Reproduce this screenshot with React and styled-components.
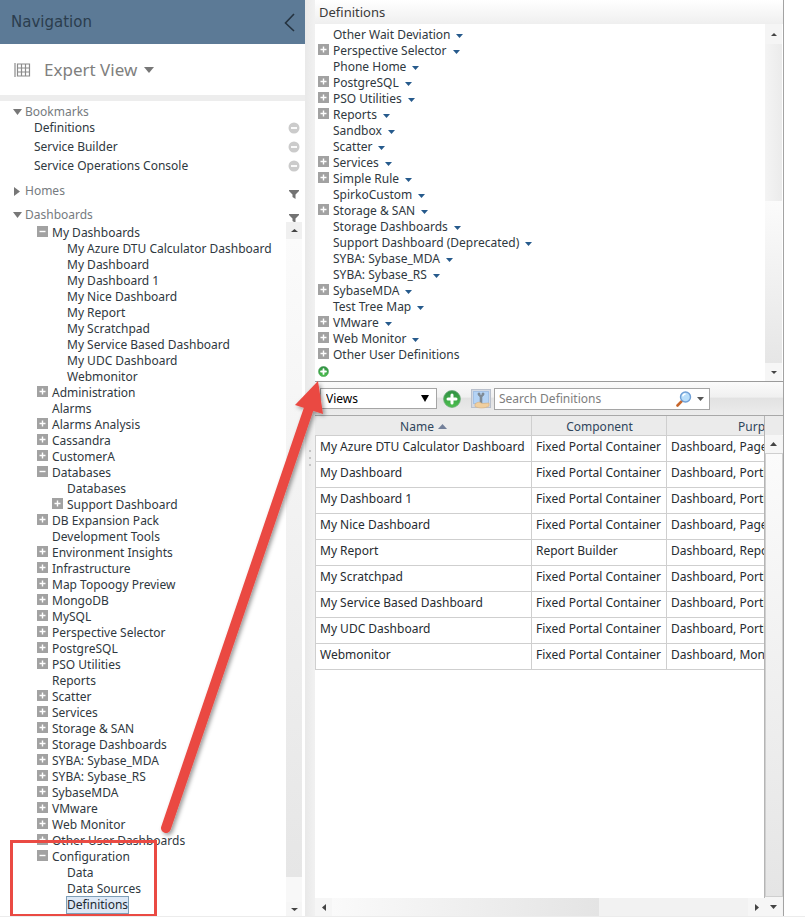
import React from 'react';
import styled, { createGlobalStyle } from 'styled-components';

const Global = createGlobalStyle`
  *, *::before, *::after { box-sizing: border-box; }
  body { margin: 0; background: #fff; }
  body, button, input, select {
    font-family: "Noto Sans", Tahoma, Verdana, sans-serif;
    font-size: 12px;
    line-height: 16px;
    color: #333c44;
  }
  ul { list-style: none; margin: 0; padding: 0; }
  h1, h2 { margin: 0; font-weight: 400; }
  button { background: none; border: 0; padding: 0; cursor: pointer; }
  svg { display: block; flex: none; }
`;

const Page = styled.div`
  position: relative;
  display: grid;
  grid-template-columns: 305px 10px minmax(0, 1fr);
  height: 100vh;
  min-height: 600px;
  padding-right: 21px;
  border-bottom: 1px solid #ececec;
  overflow: hidden;
`;

/* ---------- Navigation ---------- */
const Nav = styled.nav`
  display: flex;
  flex-direction: column;
  min-height: 0;
`;
const NavHeader = styled.header`
  display: flex;
  align-items: center;
  justify-content: space-between;
  flex: none;
  height: 44px;
  padding: 0 10px 0 11px;
  background: #5c7a96;
`;
const NavTitle = styled.h1`
  font: 15px/20px "DejaVu Sans", Verdana, sans-serif;
  color: #2b3d4d;
`;
const ViewBar = styled.div`
  display: flex;
  flex: none;
  height: 57px;
  padding: 0 14px;
  border-bottom: 6px solid #ededed;
`;
const ViewButton = styled.button`
  display: flex;
  align-items: center;
  font-size: 17px;
  line-height: 24px;
  color: #80807e;
`;
const ViewName = styled.span`
  margin: 0 7px 0 13px;
`;
const Section = styled.div`
  display: flex;
  align-items: flex-start;
  justify-content: space-between;
  flex: none;
  height: ${p => p.$height}px;
  padding: ${p => p.$top}px 6px 0 12px;
`;
const SectionButton = styled.button`
  display: flex;
  align-items: center;
  gap: 3px;
  color: #767b80;
`;
const ChevronBox = styled.span`
  display: flex;
  justify-content: center;
  width: 10px;
`;
const IconButton = styled.button`
  display: flex;
  padding: ${p => p.$pad || 0}px 0 0;
`;
const Bookmarks = styled.ul`
  display: grid;
  gap: 1px;
  flex: none;
`;
const Bookmark = styled.li`
  display: flex;
  align-items: center;
  justify-content: space-between;
  height: 18px;
  padding: 0 5px 0 34px;
`;
const ItemLink = styled.a`
  color: #2f3840;
  text-decoration: none;
  white-space: nowrap;
`;
const NavScroll = styled.div`
  display: flex;
  flex: 1;
  min-height: 0;
  padding-right: 3px;
`;
const NavTree = styled.ul`
  flex: 1;
  min-width: 0;
  overflow: hidden;
  padding: 3px 0 0;
`;
const Row = styled.li`
  display: flex;
  align-items: center;
  height: 16px;
  padding-left: ${p => p.$indent}px;
`;
const Expander = styled.span`
  display: flex;
  flex: none;
  width: 11px;
  margin: 0 4px 3px 0;
`;
const TreeLink = styled(ItemLink)`
  ${p => p.$selected && `
    background: #dde8f6;
    outline: 1px solid #7f9fb8;
    color: #1f2a33;
  `}
`;

/* ---------- Scroll bars ---------- */
const VBar = styled.div`
  display: flex;
  flex-direction: column;
  flex: none;
  width: ${p => p.$width}px;
  background: ${p => p.$bg};
`;
const BarEnd = styled.button`
  display: flex;
  align-items: center;
  justify-content: center;
  flex: none;
  width: ${p => p.$w || 16}px;
  height: ${p => p.$h || 16}px;
  background: ${p => p.$bg || '#f6f6f6'};
`;
const Fill = styled.div`
  flex: ${p => p.$grow};
  background: ${p => p.$bg};
  border: ${p => p.$border || 0};
`;

/* ---------- Splitter ---------- */
const Splitter = styled.div`
  display: flex;
  flex-direction: column;
  align-items: center;
  justify-content: center;
  gap: 5px;
  background: linear-gradient(90deg, #e9e9e9, #f1f1f1);
`;
const Dot = styled.span`
  width: 2px;
  height: 2px;
  background: #c4c4c4;
`;

/* ---------- Main ---------- */
const Main = styled.main`
  display: flex;
  flex-direction: column;
  min-width: 0;
  min-height: 0;
  border-right: 1px solid #a3a3a3;
`;
const PaneHeader = styled.header`
  flex: none;
  height: 24px;
  padding: 2px 4px;
  background: linear-gradient(#ffffff, #efefef);
`;
const PaneTitle = styled.h2`
  font-size: 13px;
  line-height: 20px;
  color: #3a3a3a;
`;
const DefinitionsPane = styled.section`
  display: flex;
  flex: none;
  height: 358px;
  padding-right: 1px;
  border-bottom: 1px solid #9b9b9b;
`;
const DefinitionTree = styled.ul`
  display: flex;
  flex-direction: column;
  justify-content: flex-end;
  flex: 1;
  min-width: 0;
  overflow: hidden;
  padding-bottom: 2px;
`;
const MenuButton = styled.button`
  display: flex;
  margin: 1px 0 0 6px;
`;
const Toolbar = styled.div`
  display: flex;
  align-items: center;
  flex: none;
  height: 34px;
  padding: 0 5px;
  background: linear-gradient(#fbfbfb, #f0f0f0 45%, #e2e2e2 50%, #ececec);
  border-bottom: 1px solid #a8a8a8;
`;
const SelectWrap = styled.span`
  position: relative;
  display: flex;
  align-items: center;
  width: 117px;
`;
const Select = styled.select`
  appearance: none;
  width: 100%;
  height: 21px;
  padding: 0 5px;
  border: 1px solid #a5a5a5;
  border-radius: 0;
  background: #fff;
  color: #000;
`;
const SelectArrow = styled.span`
  position: absolute;
  right: 8px;
  pointer-events: none;
`;
const ToolButton = styled.button`
  display: flex;
  margin-left: ${p => p.$left}px;
`;
const SearchBox = styled.div`
  display: flex;
  align-items: center;
  width: 216px;
  height: 22px;
  margin-left: 3px;
  padding: 0 5px 0 4px;
  background: #fff;
  border: 1px solid #a5a5a5;
`;
const SearchInput = styled.input`
  flex: 1;
  min-width: 0;
  border: 0;
  padding: 0;
  outline: 0;
  background: transparent;
  &::placeholder { color: #7e7e7e; opacity: 1; }
`;
const Grid = styled.section`
  display: flex;
  flex: 1;
  min-height: 0;
  background: linear-gradient(#ebebeb, #ebebeb) 0 0 / 100% 19px no-repeat;
`;
const TableColumn = styled.div`
  display: flex;
  flex-direction: column;
  flex: 1;
  min-width: 0;
`;
const TableClip = styled.div`
  flex: 1;
  min-height: 0;
  overflow: hidden;
  border-right: 1px solid #b5b5b5;
`;
const Table = styled.table`
  table-layout: fixed;
  width: 541px;
  border-collapse: separate;
  border-spacing: 0;
  color: #262b30;
`;
const Th = styled.th`
  width: ${p => p.$width}px;
  height: 20px;
  padding: 2px 0 0 1px;
  font-weight: 400;
  color: #30465c;
  background: #ebebeb;
  border-right: 1px solid #cfcfcf;
  border-bottom: 1px solid #cfcfcf;
`;
const SortLabel = styled.span`
  display: inline-flex;
  align-items: center;
  gap: 4px;
`;
const Td = styled.td`
  height: 26px;
  padding: 3px 4px 6px;
  vertical-align: top;
  white-space: nowrap;
  overflow: hidden;
  border-right: 1px solid #cfcfcf;
  border-bottom: 1px solid #cfcfcf;
  &:first-child {
    border-left: 1px solid #cfcfcf;
  }
`;
const HBar = styled.div`
  display: flex;
  flex: none;
  height: 18px;
  background: #f1f1f1;
`;

/* ---------- Annotations ---------- */
const Callout = styled.div`
  position: absolute;
  left: 10px;
  bottom: -1px;
  width: 147px;
  height: 77px;
  border: 3px solid #ea4a43;
  pointer-events: none;
`;
const ArrowLayer = styled.svg`
  position: absolute;
  left: 0;
  top: 0;
  pointer-events: none;
`;

/* ---------- Icons ---------- */
const Tri = ({ dir = 'down', w = 8, h = 5, color = '#555' }) => {
  const d = {
    down: `M0 0H${w}L${w / 2} ${h}Z`,
    up: `M0 ${h}H${w}L${w / 2} 0Z`,
    right: `M0 0V${h}L${w} ${h / 2}Z`,
    left: `M${w} 0V${h}L0 ${h / 2}Z`,
  }[dir];
  return <svg width={w} height={h} aria-hidden="true"><path d={d} fill={color} /></svg>;
};
const Box = ({ open }) => (
  <svg width="11" height="11" aria-hidden="true">
    <rect width="11" height="11" fill="#a2a2a2" />
    <path d={open ? 'M2.5 5.5H8.5' : 'M2.5 5.5H8.5M5.5 2.5V8.5'} stroke="#fff" strokeWidth="1.4" />
  </svg>
);
const Funnel = () => (
  <svg width="10" height="9" aria-hidden="true">
    <path d="M0 0H10V1L6.5 4.5V9L3.5 7V4.5L0 1Z" fill="#737373" />
  </svg>
);
const Remove = () => (
  <svg width="12" height="12" aria-hidden="true">
    <circle cx="6" cy="6" r="5.5" fill="#cbcbcb" />
    <path d="M3 6H9" stroke="#fff" strokeWidth="1.8" />
  </svg>
);
const Back = () => (
  <svg width="11" height="20" aria-hidden="true">
    <path d="M10 2L1.5 11L10 19" fill="none" stroke="#253340" strokeWidth="1.6" />
  </svg>
);
const GridIcon = () => (
  <svg width="17" height="14" aria-hidden="true">
    <path d="M1 0V14M3.5 1H15.5V13H3.5ZM7.5 1V13M11.5 1V13M3.5 5H15.5M3.5 9H15.5" fill="none" stroke="#8b8b8b" strokeWidth="1.2" />
  </svg>
);
const Add = ({ size }) => (
  <svg width={size} height={size} viewBox="0 0 18 18" aria-hidden="true">
    <defs>
      <linearGradient id={`add${size}`} x2="0" y2="1">
        <stop offset="0" stopColor="#2f8f43" />
        <stop offset="1" stopColor="#4cc04d" />
      </linearGradient>
    </defs>
    <circle cx="9" cy="9" r="8.4" fill={`url(#add${size})`} stroke="#6aa877" strokeWidth="0.8" />
    <path d="M9 5V13M5 9H13" stroke="#fff" strokeWidth="3" strokeLinecap="round" />
  </svg>
);
const Manage = () => (
  <svg width="20" height="20" aria-hidden="true">
    <rect x="0.5" y="0.5" width="19" height="18" fill="#d3d9e3" stroke="#b9c0cc" />
    <rect x="2.5" y="2.5" width="15" height="12" fill="#b4d3f5" stroke="#a3c0e4" />
    <path d="M7 4V6L9 8V14H11V8L13 6V4H11V6H9V4Z" fill="#7f8b96" stroke="#7f8b96" strokeWidth="0.6" />
    <path d="M4 15C7 12.5 9 13 11 14.5L18 14V17C14 19.5 8 19.5 4 17.5Z" fill="#f0cf9f" stroke="#d9b07c" strokeWidth="0.6" />
  </svg>
);
const Magnifier = () => (
  <svg width="16" height="16" aria-hidden="true">
    <path d="M1.5 14.5L6 9.8" stroke="#c8672c" strokeWidth="2.6" strokeLinecap="round" />
    <circle cx="9.5" cy="6" r="5" fill="#b9defa" stroke="#6f9fd6" strokeWidth="1.4" />
    <path d="M6.7 5.4A3 3 0 0 1 9.6 3" fill="none" stroke="#fff" strokeWidth="1.3" />
  </svg>
);

/* ---------- Data: [label, level, state] ---------- */
const navTree = [
  ['My Dashboards', 0, 'open'],
  ['My Azure DTU Calculator Dashboard', 1], ['My Dashboard', 1], ['My Dashboard 1', 1],
  ['My Nice Dashboard', 1], ['My Report', 1], ['My Scratchpad', 1],
  ['My Service Based Dashboard', 1], ['My UDC Dashboard', 1], ['Webmonitor', 1],
  ['Administration', 0, 'closed'], ['Alarms', 0], ['Alarms Analysis', 0, 'closed'],
  ['Cassandra', 0, 'closed'], ['CustomerA', 0, 'closed'], ['Databases', 0, 'open'],
  ['Databases', 1], ['Support Dashboard', 1, 'closed'], ['DB Expansion Pack', 0, 'closed'],
  ['Development Tools', 0], ['Environment Insights', 0, 'closed'], ['Infrastructure', 0, 'closed'],
  ['Map Topoogy Preview', 0, 'closed'], ['MongoDB', 0, 'closed'], ['MySQL', 0, 'closed'],
  ['Perspective Selector', 0, 'closed'], ['PostgreSQL', 0, 'closed'], ['PSO Utilities', 0, 'closed'],
  ['Reports', 0], ['Scatter', 0, 'closed'], ['Services', 0, 'closed'],
  ['Storage & SAN', 0, 'closed'], ['Storage Dashboards', 0, 'closed'],
  ['SYBA: Sybase_MDA', 0, 'closed'], ['SYBA: Sybase_RS', 0, 'closed'], ['SybaseMDA', 0, 'closed'],
  ['VMware', 0, 'closed'], ['Web Monitor', 0, 'closed'], ['Other User Dashboards', 0, 'closed'],
  ['Configuration', 0, 'open'], ['Data', 1], ['Data Sources', 1], ['Definitions', 1, 'selected'],
];
const definitions = [
  ['Other Wait Deviation'], ['Perspective Selector', 1], ['Phone Home'], ['PostgreSQL', 1],
  ['PSO Utilities', 1], ['Reports', 1], ['Sandbox'], ['Scatter'], ['Services', 1],
  ['Simple Rule', 1], ['SpirkoCustom'], ['Storage & SAN', 1], ['Storage Dashboards'],
  ['Support Dashboard (Deprecated)'], ['SYBA: Sybase_MDA'], ['SYBA: Sybase_RS'],
  ['SybaseMDA', 1], ['Test Tree Map'], ['VMware', 1], ['Web Monitor', 1],
  ['Other User Definitions', 1, 'plain'],
];
const FIXED = 'Fixed Portal Container';
const views = [
  ['My Azure DTU Calculator Dashboard', FIXED, 'Dashboard, Page'],
  ['My Dashboard', FIXED, 'Dashboard, Portlet'],
  ['My Dashboard 1', FIXED, 'Dashboard, Portlet'],
  ['My Nice Dashboard', FIXED, 'Dashboard, Page'],
  ['My Report', 'Report Builder', 'Dashboard, Report'],
  ['My Scratchpad', FIXED, 'Dashboard, Portlet'],
  ['My Service Based Dashboard', FIXED, 'Dashboard, Portlet'],
  ['My UDC Dashboard', FIXED, 'Dashboard, Portlet'],
  ['Webmonitor', FIXED, 'Dashboard, Monitor'],
];

const SectionRow = ({ label, open, height, top, filter }) => (
  <Section $height={height} $top={top}>
    <SectionButton aria-expanded={!!open}>
      <ChevronBox>
        {open ? <Tri w={9} h={6} color="#777" /> : <Tri dir="right" w={6} h={9} color="#777" />}
      </ChevronBox>
      {label}
    </SectionButton>
    {filter && <IconButton $pad={7} aria-label={`Filter ${label}`}><Funnel /></IconButton>}
  </Section>
);

const Navigation = () => (
  <Nav>
    <NavHeader>
      <NavTitle>Navigation</NavTitle>
      <IconButton aria-label="Collapse navigation"><Back /></IconButton>
    </NavHeader>
    <ViewBar>
      <ViewButton>
        <GridIcon />
        <ViewName>Expert View</ViewName>
        <Tri w={10} h={6} color="#777" />
      </ViewButton>
    </ViewBar>
    <SectionRow label="Bookmarks" open height={18} top={3} />
    <Bookmarks>
      {['Definitions', 'Service Builder', 'Service Operations Console'].map(b => (
        <Bookmark key={b}>
          <ItemLink href="#">{b}</ItemLink>
          <IconButton aria-label={`Remove ${b}`}><Remove /></IconButton>
        </Bookmark>
      ))}
    </Bookmarks>
    <SectionRow label="Homes" height={24} top={8} filter />
    <SectionRow label="Dashboards" open height={23} top={8} filter />
    <NavScroll>
      <NavTree>
        {navTree.map(([label, level, state], i) => {
          const box = state === 'open' || state === 'closed';
          return (
            <Row key={i} $indent={37 + level * 15}>
              <Expander>{box && <Box open={state === 'open'} />}</Expander>
              <TreeLink href="#" $selected={state === 'selected'}>{label}</TreeLink>
            </Row>
          );
        })}
      </NavTree>
      <VBar $width={16} $bg="#f4f4f4">
        <BarEnd aria-label="Scroll up" $h={17} $bg="#f0f0f0"><Tri dir="up" w={7} h={3} color="#444" /></BarEnd>
        <Fill $grow={634} $bg="linear-gradient(#fbfbfb, #e6e6e6)" />
        <Fill $grow={25} $bg="#f8f8f8" />
        <BarEnd aria-label="Scroll down" $h={14}><Tri w={7} h={3} color="#444" /></BarEnd>
      </VBar>
    </NavScroll>
  </Nav>
);

const Definitions = () => (
  <DefinitionsPane>
    <DefinitionTree>
      {definitions.map(([label, box, plain]) => (
        <Row key={label} $indent={3}>
          <Expander>{box && <Box />}</Expander>
          <ItemLink href="#">{label}</ItemLink>
          {!plain && <MenuButton aria-label={`${label} menu`}><Tri w={7} h={4} color="#265a8c" /></MenuButton>}
        </Row>
      ))}
      <Row $indent={3}>
        <IconButton aria-label="Add definition"><Add size={11} /></IconButton>
      </Row>
    </DefinitionTree>
    <VBar $width={17} $bg="#f0f0f0">
      <BarEnd aria-label="Scroll up" $w={17} $h={20} $bg="#f5f5f5"><Tri dir="up" w={6} h={3} color="#444" /></BarEnd>
      <Fill $grow={157} $bg="linear-gradient(90deg, #f4f4f4, #ebebeb)" />
      <Fill $grow={162} $bg="linear-gradient(#fbfbfb, #e6e6e6)" />
      <BarEnd aria-label="Scroll down" $w={17} $h={18}><Tri w={6} h={3} color="#444" /></BarEnd>
    </VBar>
  </DefinitionsPane>
);

const ViewGrid = () => (
  <Grid>
    <TableColumn>
      <TableClip>
        <Table>
          <thead>
            <tr>
              <Th $width={217} aria-sort="ascending">
                <SortLabel>Name <Tri dir="up" w={9} h={5} color="#73809a" /></SortLabel>
              </Th>
              <Th $width={135}>Component</Th>
              <Th $width={189}>Purpose</Th>
            </tr>
          </thead>
          <tbody>
            {views.map(r => (
              <tr key={r[0]}>{r.map((c, i) => <Td key={i}>{c}</Td>)}</tr>
            ))}
          </tbody>
        </Table>
      </TableClip>
      <HBar>
        <BarEnd aria-label="Scroll left" $w={17} $h={18}><Tri dir="left" w={4} h={7} color="#444" /></BarEnd>
        <Fill $grow={266} $bg="linear-gradient(90deg, #fafafa, #e4e4e4)" />
        <Fill $grow={149} $bg="#f2f2f2" />
        <BarEnd aria-label="Scroll right" $w={17} $h={18}><Tri dir="right" w={4} h={7} color="#444" /></BarEnd>
      </HBar>
    </TableColumn>
    <VBar $width={18} $bg="linear-gradient(transparent 20px, #f4f4f4 20px)">
      <BarEnd as="span" $h={19} $bg="transparent" />
      <BarEnd aria-label="Scroll up" $w={17} $h={18}><Tri dir="up" w={7} h={4} color="#444" /></BarEnd>
      <Fill $grow={1} $bg="linear-gradient(#fbfbfb, #e5e5e5)" $border="1px solid #cfcfcf" />
      <BarEnd aria-label="Scroll down" $w={17} $h={19}><Tri w={7} h={4} color="#444" /></BarEnd>
    </VBar>
  </Grid>
);

export default function App() {
  return (
    <>
      <Global />
      <Page>
        <Navigation />
        <Splitter><Dot /><Dot /><Dot /></Splitter>
        <Main>
          <PaneHeader><PaneTitle>Definitions</PaneTitle></PaneHeader>
          <Definitions />
          <Toolbar>
            <SelectWrap>
              <Select aria-label="Definition type" defaultValue="Views">
                <option>Views</option>
              </Select>
              <SelectArrow><Tri w={8} h={7} color="#000" /></SelectArrow>
            </SelectWrap>
            <ToolButton $left={6} aria-label="Add view"><Add size={18} /></ToolButton>
            <ToolButton $left={10} aria-label="Manage"><Manage /></ToolButton>
            <SearchBox>
              <SearchInput aria-label="Search Definitions" placeholder="Search Definitions" />
              <IconButton aria-label="Search"><Magnifier /></IconButton>
              <ToolButton $left={5} aria-label="Search options"><Tri w={7} h={4} /></ToolButton>
            </SearchBox>
          </Toolbar>
          <ViewGrid />
        </Main>
        <Callout />
        <ArrowLayer width="340" height="850" aria-hidden="true">
          <defs>
            <filter id="shade" x="-10%" y="-10%" width="130%" height="120%">
              <feDropShadow dx="2" dy="2" stdDeviation="2" floodColor="#000" floodOpacity="0.4" />
            </filter>
          </defs>
          <g filter="url(#shade)" fill="#ea4a43">
            <path d="M166 828L309 408" stroke="#ea4a43" strokeWidth="10" strokeLinecap="round" />
            <path d="M318 381L295 405L323 414Z" />
          </g>
        </ArrowLayer>
      </Page>
    </>
  );
}
